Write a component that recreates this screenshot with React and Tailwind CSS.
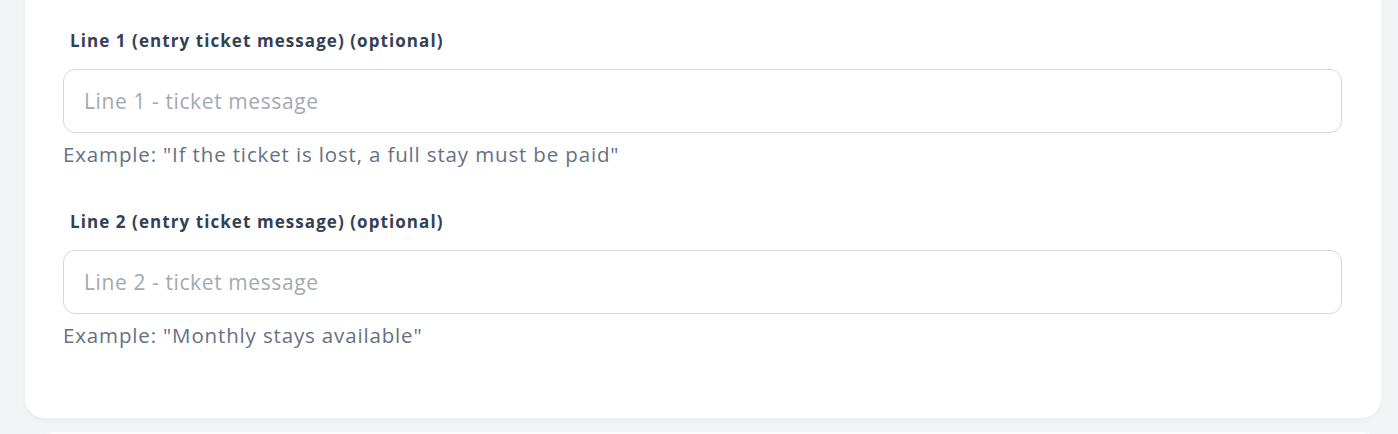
import { useState } from "react";

const fields = [
  {
    id: "line1",
    label: "Line 1 (entry ticket message) (optional)",
    placeholder: "Line 1 - ticket message",
    hint: 'Example: "If the ticket is lost, a full stay must be paid"',
  },
  {
    id: "line2",
    label: "Line 2 (entry ticket message) (optional)",
    placeholder: "Line 2 - ticket message",
    hint: 'Example: "Monthly stays available"',
  },
];

const TicketMessages = () => {
  const [values, setValues] = useState({ line1: "", line2: "" });

  return (
    <div
      className="min-h-screen bg-[#f3f4f6] pl-[25px] pr-[17px]"
      style={{ fontFamily: '"Open Sans", sans-serif' }}
    >
      {/* Card */}
      <div className="bg-white rounded-b-[20px] shadow-[0_2px_6px_rgba(0,0,0,0.04)] pl-[38px] pr-[39px] pt-[31px] pb-[69px] flex flex-col gap-[44px]">
        {fields.map((f) => (
          <div key={f.id} className="flex flex-col">
            <label
              htmlFor={f.id}
              className="pl-[7px] text-[17px] leading-[20px] tracking-[1.07px] font-bold text-[#344054] mb-[18px]"
            >
              {f.label}
            </label>
            <input
              id={f.id}
              value={values[f.id]}
              onChange={(e) => setValues({ ...values, [f.id]: e.target.value })}
              placeholder={f.placeholder}
              className="h-[64px] w-full rounded-[12px] border border-[#d5d8dd] px-[20px] text-[21px] tracking-[0.6px] text-[#344054] placeholder:text-[#a3a9b3] outline-none"
            />
            <p className="mt-[7px] text-[20.5px] leading-[28px] tracking-[0.85px] text-[#667085]">
              {f.hint}
            </p>
          </div>
        ))}
      </div>

      {/* Next card */}
      <div className="mt-[14px] ml-[10px] h-[40px] bg-[#fcfcfd] rounded-t-[20px]" />
    </div>
  );
};

export default TicketMessages;
